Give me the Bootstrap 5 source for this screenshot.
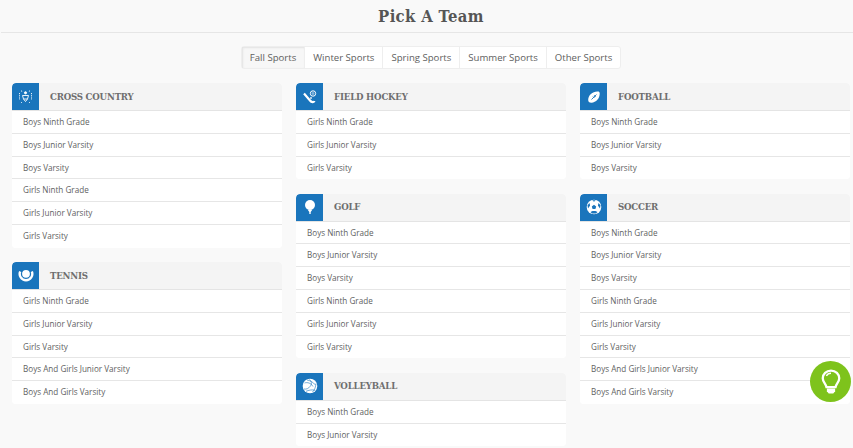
<!DOCTYPE html>
<html lang="en"><head><meta charset="utf-8"><title>Pick A Team</title>
<link href="https://cdn.jsdelivr.net/npm/bootstrap@5.3.0/dist/css/bootstrap.min.css" rel="stylesheet">
<style>
html,body{height:448px;overflow:hidden}
body{background:#f9f9f9;font-family:"Open Sans","Noto Sans",sans-serif;color:#666}
.page-head{height:33px;border-bottom:1px solid #e6e6e6;margin:0 0 13px 1px;padding-left:8px}
.page-head h1{font:700 16.5px/33px "DejaVu Serif Condensed","DejaVu Serif",serif;color:#555;margin:0;letter-spacing:.35px}
.tab-wrap{padding-left:9px;margin-bottom:14px}
.sport-tabs{height:23px;background:#fff;border:1px solid #eee;border-radius:3px;flex-wrap:nowrap}
.sport-tabs .nav-link{font-size:9.6px;line-height:21px;padding:0 8px;color:#606060;border:0;border-right:1px solid #eee;border-radius:0;white-space:nowrap}
.sport-tabs .nav-item:last-child .nav-link{border-right:0}
.sport-tabs .nav-link.active{background:#f7f7f7;box-shadow:inset 1px 1px 2px #e2e2e2;color:#606060}
.team-cols{display:grid;grid-template-columns:270px 270px 270px;column-gap:14px;padding-left:12px}
.team-card{border:0;border-radius:4px;margin-bottom:14.300px;background:#fff;overflow:hidden}
.team-head{height:28px;background:#f4f4f4;border-bottom:1px solid #e4e4e4;display:flex;align-items:center;padding:0}
.team-ico{width:27px;height:27px;background:#1a75bc;border-top-left-radius:4px;display:flex;align-items:center;justify-content:center;flex:none}
.team-name{font:700 9.6px/1 "DejaVu Serif Condensed","DejaVu Serif",serif;color:#6e6e6e;margin-left:11px;letter-spacing:-.2px;text-transform:uppercase}
.team-card .list-group-item{font-size:8.15px;line-height:22px;height:22.800px;padding:0 0 0 11px;color:#5f5f5f;border:0;border-bottom:1px solid #e6e6e6;border-radius:0;background:#fff}
.team-card .list-group-item:last-child{border-bottom:0}
.help-bulb{position:fixed;left:810px;top:361px;width:41px;height:41px;border-radius:50%;background:#7ec31c;display:flex;align-items:center;justify-content:center}
</style></head><body>
<header class="page-head text-center"><h1>Pick A Team</h1></header>
<div class="tab-wrap d-flex justify-content-center">
<ul class="nav sport-tabs">
<li class="nav-item"><a class="nav-link active" href="#">Fall Sports</a></li>
<li class="nav-item"><a class="nav-link" href="#">Winter Sports</a></li>
<li class="nav-item"><a class="nav-link" href="#">Spring Sports</a></li>
<li class="nav-item"><a class="nav-link" href="#">Summer Sports</a></li>
<li class="nav-item"><a class="nav-link" href="#">Other Sports</a></li>
</ul></div>
<main class="team-cols">
<div>
<section class="card team-card"><div class="team-head"><span class="team-ico"><svg width="15" height="15" viewBox="0 0 15 15" fill="none" stroke="#fff" stroke-width=".9"><path d="M4.500 6.500h6l-1 3.500h-4zM5.500 10l2 2.500 2-2.500"/><circle cx="7.500" cy="3.800" r="1.100" fill="#fff"/><path d="M1.500 4v7M13.500 4v7M3 1.800l2 1M12 1.800l-2 1M3 13l1 1M12 13l-1 1" stroke-dasharray="1.200 1"/></svg></span><span class="team-name">Cross Country</span></div>
<div class="list-group list-group-flush"><a class="list-group-item" href="#">Boys Ninth Grade</a><a class="list-group-item" href="#">Boys Junior Varsity</a><a class="list-group-item" href="#">Boys Varsity</a><a class="list-group-item" href="#">Girls Ninth Grade</a><a class="list-group-item" href="#">Girls Junior Varsity</a><a class="list-group-item" href="#">Girls Varsity</a></div></section>
<section class="card team-card"><div class="team-head"><span class="team-ico"><svg width="16" height="16" viewBox="0 0 16 16"><circle cx="8" cy="5.800" r="3.900" fill="#fff"/><path d="M2.200 3.500A6.300 6.300 0 1 0 13.800 3.500" fill="none" stroke="#fff" stroke-width="2.400"/></svg></span><span class="team-name">Tennis</span></div>
<div class="list-group list-group-flush"><a class="list-group-item" href="#">Girls Ninth Grade</a><a class="list-group-item" href="#">Girls Junior Varsity</a><a class="list-group-item" href="#">Girls Varsity</a><a class="list-group-item" href="#">Boys And Girls Junior Varsity</a><a class="list-group-item" href="#">Boys And Girls Varsity</a></div></section>
</div>
<div>
<section class="card team-card"><div class="team-head"><span class="team-ico"><svg width="16" height="16" viewBox="0 0 16 16" fill="none" stroke="#fff"><path d="M2 4.500 8 11.500c1.500 2 4 2 4.500.5" stroke-width="2.200"/><path d="M9 10V8" stroke-width="1.300"/><circle cx="11" cy="4.500" r="2.700" stroke-width="1"/><circle cx="11" cy="4.500" r=".9" stroke-width=".6"/></svg></span><span class="team-name">Field Hockey</span></div>
<div class="list-group list-group-flush"><a class="list-group-item" href="#">Girls Ninth Grade</a><a class="list-group-item" href="#">Girls Junior Varsity</a><a class="list-group-item" href="#">Girls Varsity</a></div></section>
<section class="card team-card"><div class="team-head"><span class="team-ico"><svg width="14" height="16" viewBox="0 0 14 16" fill="#fff"><circle cx="7" cy="6" r="5"/><path d="M4.500 10.500h5L7.700 13v2H6.300v-2z"/></svg></span><span class="team-name">Golf</span></div>
<div class="list-group list-group-flush"><a class="list-group-item" href="#">Boys Ninth Grade</a><a class="list-group-item" href="#">Boys Junior Varsity</a><a class="list-group-item" href="#">Boys Varsity</a><a class="list-group-item" href="#">Girls Ninth Grade</a><a class="list-group-item" href="#">Girls Junior Varsity</a><a class="list-group-item" href="#">Girls Varsity</a></div></section>
<section class="card team-card"><div class="team-head"><span class="team-ico"><svg width="16" height="16" viewBox="0 0 16 16" fill="none"><circle cx="8" cy="8" r="7.300" fill="#fff"/><path d="M7.500 1.500c2.500 2.500 2.500 5 .5 7M2.500 5c3-1 6.500 0 8.500 3.500M14 5.500c-.5 3.500-1 6-3.500 8.500M8 8.500c-1.500 2-3.500 3-6 2.500M5 2c3 .5 6 2 8.500 5M4 13.300c2.500-1 6-2 9-1" stroke="#1a75bc" stroke-width=".6"/></svg></span><span class="team-name">Volleyball</span></div>
<div class="list-group list-group-flush"><a class="list-group-item" href="#">Boys Ninth Grade</a><a class="list-group-item" href="#">Boys Junior Varsity</a></div></section>
</div>
<div>
<section class="card team-card"><div class="team-head"><span class="team-ico"><svg width="16" height="16" viewBox="0 0 16 16"><path d="M2.200 10.500C2.500 6 6.500 2.200 12 2.500c1 0 1.600.6 1.700 1.500.3 5.500-3.700 9.500-8.200 9.700-2 .1-3.500-1-3.300-3.200z" fill="#fff"/><path d="M5.500 10.500 10.500 5.500M7 7.500l1.500 1.500M8.300 6.300l1.400 1.400" stroke="#1a75bc" stroke-width=".9"/></svg></span><span class="team-name">Football</span></div>
<div class="list-group list-group-flush"><a class="list-group-item" href="#">Boys Ninth Grade</a><a class="list-group-item" href="#">Boys Junior Varsity</a><a class="list-group-item" href="#">Boys Varsity</a></div></section>
<section class="card team-card"><div class="team-head"><span class="team-ico"><svg width="16" height="16" viewBox="0 0 16 16"><circle cx="8" cy="8" r="7.300" fill="#fff"/><path d="M8 5.800 10.200 7.400 9.400 10H6.600L5.800 7.400zM6.200 1.300h3.600L8 2.800zM1.500 6.200 3.500 4l.6 2.400-2.100 3zM14.500 6.200 12.500 4l-.6 2.400 2.100 3zM4.500 13l2-.9h3l2 .9-1.500 1.500H6z" fill="#1a75bc"/></svg></span><span class="team-name">Soccer</span></div>
<div class="list-group list-group-flush"><a class="list-group-item" href="#">Boys Ninth Grade</a><a class="list-group-item" href="#">Boys Junior Varsity</a><a class="list-group-item" href="#">Boys Varsity</a><a class="list-group-item" href="#">Girls Ninth Grade</a><a class="list-group-item" href="#">Girls Junior Varsity</a><a class="list-group-item" href="#">Girls Varsity</a><a class="list-group-item" href="#">Boys And Girls Junior Varsity</a><a class="list-group-item" href="#">Boys And Girls Varsity</a></div></section>
</div>
</main>
<a class="help-bulb" href="#" aria-label="Help"><svg width="22" height="28" viewBox="0 0 24 30" fill="none"><path d="M12 2.500C6.800 2.500 3 6.300 3 11c0 4 3.300 5.800 4 9.500h10c.7-3.700 4-5.500 4-9.500 0-4.700-3.800-8.500-9-8.500z" stroke="#fff" stroke-width="2.500"/><path d="M7 8.500C8 6.500 10 5.500 12 5.500" stroke="#fff" stroke-width="1.500"/><path d="M7.500 22h9v3l-2 2.500h-5l-2-2.500z" fill="#fff"/></svg></a>
<script src="https://cdn.jsdelivr.net/npm/bootstrap@5.3.0/dist/js/bootstrap.bundle.min.js"></script>
</body></html>
